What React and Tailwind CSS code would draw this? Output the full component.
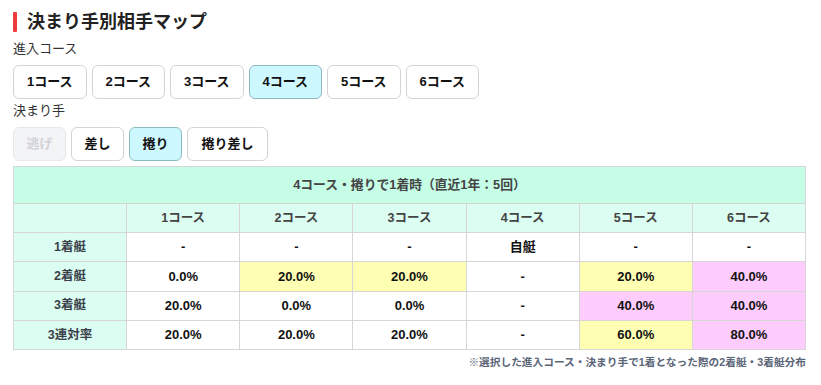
import React from "react";

const courses = ["1コース", "2コース", "3コース", "4コース", "5コース", "6コース"];
const kimarite = [
  { label: "逃げ", state: "disabled", w: "w-[53px]" },
  { label: "差し", state: "normal", w: "w-[53px]" },
  { label: "捲り", state: "active", w: "w-[53px]" },
  { label: "捲り差し", state: "normal", w: "w-[81px]" },
];

const Y = "bg-[#ffffb4]";
const P = "bg-[#ffccfe]";
const W = "bg-white";

const rows = [
  { h: "1着艇", cells: [["-", W], ["-", W], ["-", W], ["自艇", W], ["-", W], ["-", W]] },
  { h: "2着艇", cells: [["0.0%", W], ["20.0%", Y], ["20.0%", Y], ["-", W], ["20.0%", Y], ["40.0%", P]] },
  { h: "3着艇", cells: [["20.0%", W], ["0.0%", W], ["0.0%", W], ["-", W], ["40.0%", P], ["40.0%", P]] },
  { h: "3連対率", cells: [["20.0%", W], ["20.0%", W], ["20.0%", W], ["-", W], ["60.0%", Y], ["80.0%", P]] },
];

export default function App() {
  return (
    <div
      className="w-[821px] h-[385px] bg-white px-[13px] pt-[12px] overflow-hidden"
      style={{ fontFamily: '"Liberation Sans", "Noto Sans CJK JP", sans-serif' }}
    >
      <div className="flex items-center gap-[10px] h-[20px]">
        <div className="w-[4px] h-[20px] bg-[#ef3b3b] rounded-[1px]" />
        <div className="text-[18px] font-bold text-[#222] leading-[20px]">決まり手別相手マップ</div>
      </div>
      <div className="mt-[9px] text-[13px] text-[#333] leading-[16px]">進入コース</div>
      <div className="mt-[8px] flex gap-[5px]">
        {courses.map((c, i) => (
          <div
            key={c}
            className={`w-[73.5px] h-[34px] rounded-[6px] border flex items-center justify-center text-[13px] font-bold text-[#111] ${
              i === 3 ? "bg-[#cef8ff] border-[#8fb9c0]" : "bg-white border-[#d4d4d4]"
            }`}
          >
            {c}
          </div>
        ))}
      </div>
      <div className="mt-[4px] text-[13px] text-[#333] leading-[16px]">決まり手</div>
      <div className="mt-[8px] flex gap-[5px]">
        {kimarite.map((k) => (
          <div
            key={k.label}
            className={`${k.w} h-[34px] rounded-[6px] border flex items-center justify-center text-[13px] font-bold ${
              k.state === "active"
                ? "bg-[#cef8ff] border-[#8fb9c0] text-[#111]"
                : k.state === "disabled"
                ? "bg-[#f3f4f6] border-[#e8e8e8] text-[#d0d3d8]"
                : "bg-white border-[#d4d4d4] text-[#111]"
            }`}
          >
            {k.label}
          </div>
        ))}
      </div>
      <div className="mt-[5px] w-[793px] border-l border-t border-[#d6d6d6]">
        <div className="h-[37px] bg-[#c6fde6] border-r border-b border-[#d6d6d6] flex items-center justify-center text-[12.8px] font-bold text-[#444]">
          4コース・捲りで1着時（直近1年：5回）
        </div>
        <div className="grid grid-cols-7">
          <div className="h-[29px] bg-[#dcfdf1] border-r border-b border-[#d6d6d6]" />
          {courses.map((c) => (
            <div
              key={c}
              className="h-[29px] bg-[#dcfdf1] border-r border-b border-[#d6d6d6] flex items-center justify-center text-[12.5px] font-bold text-[#444]"
            >
              {c}
            </div>
          ))}
          {rows.map((r) => (
            <React.Fragment key={r.h}>
              <div className="h-[29.3px] bg-[#dcfdf1] border-r border-b border-[#d6d6d6] flex items-center justify-center text-[12.5px] font-bold text-[#3a3f4a]">
                {r.h}
              </div>
              {r.cells.map(([v, bg], j) => (
                <div
                  key={j}
                  className={`h-[29.3px] ${bg} border-r border-b border-[#d6d6d6] flex items-center justify-center text-[13px] font-bold text-[#111]`}
                >
                  {v}
                </div>
              ))}
            </React.Fragment>
          ))}
        </div>
      </div>
      <div className="w-[793px] mt-[5px] text-right text-[10.7px] font-bold text-[#5b6578] leading-[14px]">
        ※選択した進入コース・決まり手で1着となった際の2着艇・3着艇分布
      </div>
    </div>
  );
}
